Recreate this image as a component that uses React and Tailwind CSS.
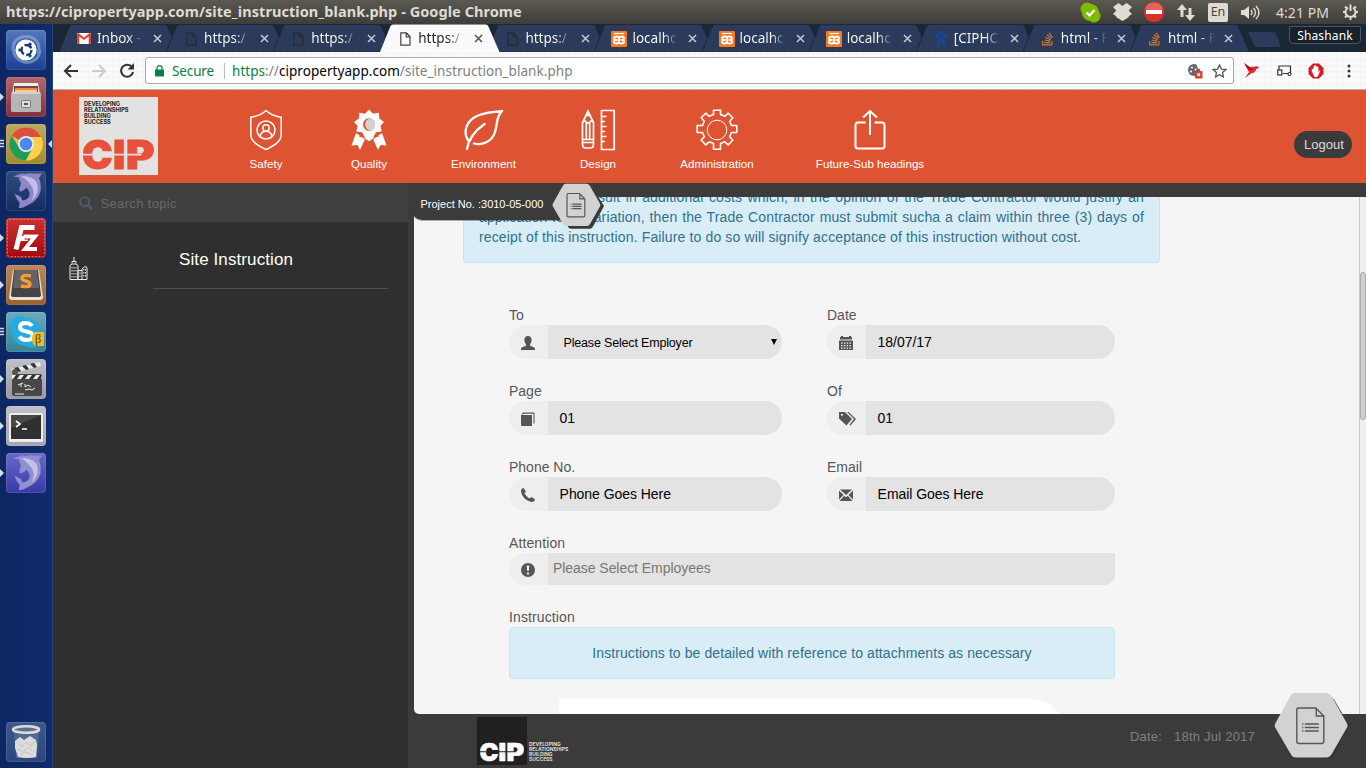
import React from "react";
import { SiStackoverflow } from "react-icons/si";

function Page({ dark }) {
  return (
    <svg width="11" height="14" viewBox="0 0 11 14" fill="none" stroke={dark ? "#444" : "#282b30"} strokeWidth="1.2">
      <path d="M.8 .8h5.6l3.600 3.700v8.700H.8zM6.200 1v3.800H10" />
    </svg>
  );
}
function Gmail() {
  return (
    <svg width="14" height="11" viewBox="0 0 14 11">
      <rect width="14" height="11" rx="1" fill="#f5f5f5" />
      <path d="M0 1v10h2.300V3.400L7 7l4.700-3.600V11H14V1L12.600 0 7 4.500 1.400 0z" fill="#dc4437" />
    </svg>
  );
}
function Xampp() {
  return (
    <span className="flex h-[16px] w-[16px] shrink-0 items-center justify-center rounded-[1px] bg-[#f47920]">
      <svg width="14" height="14" viewBox="0 0 14 14" fill="none" stroke="#fff" strokeWidth="1.800">
        <path d="M2 1.500h10" strokeWidth="1.200" />
        <path d="M7 5.500Q6.500 4.500 4.500 4.500 2 4.500 2 6.300 2 8 4 8 2 8 2 9.700 2 11.500 4.500 11.500 7 11.500 7 9V6.500Q7.500 4.500 9.500 4.500q2.500 0 2.500 1.800Q12 8 9.500 8q2.500 0 2.500 1.700 0 1.800-2.500 1.800T7 10M4 8h1.500M8.500 8H10" />
      </svg>
    </span>
  );
}
function Jira() {
  return (
    <svg width="14" height="16" viewBox="0 0 14 16" fill="none" stroke="#15498c" strokeWidth="2.400">
      <circle cx="7" cy="2.600" r="1.300" fill="#15498c" />
      <path d="M1.500 3.500Q4 7.500 7 7.500t5.500-4M2 13.500Q4 15.500 4.500 12 5 9.500 7 8.500q2 1 2.500 3.500.5 3.500 2.500 1.500M4 9.500l6 0" />
    </svg>
  );
}

const TABS = [
  { icon: "gmail", label: "Inbox -" },
  { icon: "page", label: "https:/" },
  { icon: "page", label: "https:/" },
  { icon: "page", label: "https:/", active: true },
  { icon: "page", label: "https:/" },
  { icon: "xampp", label: "localhc" },
  { icon: "xampp", label: "localhc" },
  { icon: "xampp", label: "localhc" },
  { icon: "jira", label: "[CIPHC" },
  { icon: "so", label: "html - F" },
  { icon: "so", label: "html - F" },
];

function Tab({ icon, label, active }) {
  return (
    <div className={active ? "relative z-10 h-[28px] w-[107.1px] shrink-0" : "relative h-[28px] w-[107.1px] shrink-0"}>
      <svg className="absolute top-0 left-0" width="120" height="28" viewBox="0 0 120 28">
        <path d="M0 28L10.500 2Q11.200 .5 13 .5H106Q107.500 .5 108.200 2L119.500 28z" fill={active ? "#fafafa" : "#2c3b5c"} stroke={active ? "none" : "#1b2840"} />
      </svg>
      <div className="relative flex h-[29px] items-center pl-[17px]">
        <span className="flex w-[16px] shrink-0 items-center justify-center">
          {icon === "gmail" && <Gmail />}
          {icon === "page" && <Page dark={active} />}
          {icon === "xampp" && <Xampp />}
          {icon === "jira" && <Jira />}
          {icon === "so" && <SiStackoverflow className="h-[14px] w-[13px] text-[#d9772c]" />}
        </span>
        <span className={active
          ? "ml-[5px] w-[47px] overflow-hidden bg-linear-to-r from-[#222] from-65% to-transparent to-98% bg-clip-text font-['Noto_Sans',sans-serif] text-[13.5px] whitespace-nowrap text-transparent"
          : "ml-[5px] w-[47px] overflow-hidden bg-linear-to-r from-white from-65% to-transparent to-98% bg-clip-text font-['Noto_Sans',sans-serif] text-[13.5px] whitespace-nowrap text-transparent"}>{label}</span>
        <svg className="ml-[9px] shrink-0" width="9" height="9" viewBox="0 0 9 9" stroke={active ? "#555" : "#c0c5cf"} strokeWidth="1.6"><path d="M1 1l7 7M8 1L1 8" /></svg>
      </div>
    </div>
  );
}

const LAUNCH = [
  { id: "ubuntu", bg: "from-[#5478bd] to-[#183f91]" },
  { id: "files", bg: "from-[#b4656e] to-[#852e3c]", mark: "tri" },
  { id: "chrome", bg: "from-[#bda763] to-[#a48b2b]", mark: "bars" },
  { id: "dolphin", bg: "from-[#314e82] to-[#132c61]" },
  { id: "fz", bg: "from-[#cc3032] to-[#a10608]", mark: "tri" },
  { id: "sublime", bg: "from-[#be8859] to-[#9a6128]", mark: "tri" },
  { id: "skype", bg: "from-[#68abbd] to-[#338496]", mark: "bars" },
  { id: "clap", bg: "from-[#c0c0c6] to-[#98989f]", mark: "tri" },
  { id: "term", bg: "from-[#c0c0c8] to-[#a4a4af]", mark: "tri" },
  { id: "dolphin2", bg: "from-[#686ac8] to-[#3939a7]", mark: "tri" },
];

function LaunchIcon({ id }) {
  if (id === "ubuntu") return (
    <svg width="40" height="40" viewBox="0 0 40 40" fill="none" stroke="#a9bfe2" strokeOpacity=".5" strokeWidth="3">
      <path d="M7 20C6 10 15 5 24 7c7 2 11 9 8 17M34 20c0 8-8 14-16 12-7-2-11-7-10-13" />
      <circle cx="20" cy="20" r="10.500" fill="#fff" stroke="none" />
      <circle cx="20.500" cy="20" r="5" stroke="#173a78" strokeOpacity="1" strokeWidth="2.300" strokeDasharray="8 2.470" />
      <g fill="#173a78" stroke="none"><circle cx="13.800" cy="20" r="1.600" /><circle cx="24" cy="14.200" r="1.600" /><circle cx="24" cy="25.800" r="1.600" /></g>
    </svg>
  );
  if (id === "files") return (
    <svg width="40" height="40" viewBox="0 0 40 40">
      <path d="M8 6h24l2 12H6z" fill="#eee" /><path d="M8 9h24v9H8z" fill="#6c4a3c" /><path d="M9 11h22v7H9z" fill="#ed8a41" /><path d="M9 13h22v5H9z" fill="#f6ca91" />
      <rect x="5" y="15" width="30" height="20" rx="1.500" fill="#b5b5b3" /><path d="M6 16h28" stroke="#eee" /><rect x="15.500" y="23.500" width="9" height="7" rx="1" fill="#ddd" stroke="#777" /><rect x="18" y="26" width="4" height="2" fill="#555" />
    </svg>
  );
  if (id === "chrome") return (
    <svg width="40" height="40" viewBox="0 0 40 40">
      <circle cx="20" cy="20" r="16.500" fill="#e4c441" />
      <path d="M20 20L5.700 11.750A16.500 16.500 0 0 1 34.300 11.750L35 13H20z" fill="#d95040" />
      <path d="M5.700 11.750A16.500 16.500 0 0 0 20 36.500L27 24 20 27 13.500 24z" fill="#1f9c5b" />
      <path d="M20 36.500A16.500 16.500 0 0 0 35.300 13H20l6.500 11z" fill="#fccf4b" />
      <circle cx="20" cy="20" r="8" fill="#f1f1f1" /><circle cx="20" cy="20" r="6.300" fill="#4a8af0" />
    </svg>
  );
  if (id === "dolphin" || id === "dolphin2") return (
    <svg width="40" height="40" viewBox="0 0 40 40">
      <path d="M7 5.500Q10 4.500 12.500 3.500 16 2 19 3q4-1 8-.5l9 0q-2 2.500-3 4.500 2.500 6 1.500 13-1.500 7-8 11.500-4 2.500-6.500 3.500-3 2.500-7.500 2 1.500-3 1-5.500-3-3-5-8.500 4 1 6.500 3l1.500 3.500q6-1 7-5 .5-4-3-8-3 4-7 4-.500-4 1.500-8-2-3-2-6.500-3 .5-5-.5z" fill={id === "dolphin" ? "#8d86c8" : "#8f90cf"} />
      <path d="M15 5q10 0 15 5 3 6 1 12-2 5-6 8 4-7 2-12-3-7-12-13z" fill="#d8d5f3" opacity=".7" />
    </svg>
  );
  if (id === "fz") return (
    <svg width="40" height="40" viewBox="0 0 40 40" fill="none">
      <rect x="1.500" y="1.500" width="37" height="37" rx="2" stroke="#e0888a" strokeDasharray="2 1.500" strokeWidth=".8" />
      <path d="M10 31.500L15.500 9.500h13M12.500 20.500h10" stroke="#fff" strokeWidth="5" /><path d="M18.500 18.500h10L19 31h11.500" stroke="#b30d10" strokeWidth="6" /><path d="M17.500 18.500H29L19 31h12" stroke="#fff" strokeWidth="4" />
    </svg>
  );
  if (id === "sublime") return (
    <svg width="40" height="40" viewBox="0 0 40 40">
      <path d="M7 5h26l4 27q0 3-3 3H6q-3 0-3-3z" fill="#e5dfd8" /><path d="M8 5h24l3 25q0 2-2 2H7q-2 0-2-2z" fill="#444" /><path d="M9 5h22l2 18H7z" fill="#636363" />
      <path d="M25 11q-9-2-9 2.500c0 3 8 2 8 5.500q0 4-9 2" fill="none" stroke="#ff9b2e" strokeWidth="3.400" />
    </svg>
  );
  if (id === "skype") return (
    <svg width="40" height="40" viewBox="0 0 40 40">
      <circle cx="13" cy="13" r="9" fill="#27aadf" /><circle cx="26" cy="27" r="9" fill="#27aadf" /><circle cx="20" cy="20" r="14" fill="#27aadf" />
      <path d="M26 14q-2-3-6.500-3c-7 0-7 7-1 8 7 1.500 9 2.500 8 6q-1 3-6 3-5 0-7-3.500" fill="none" stroke="#fff" strokeWidth="4" />
      <path d="M29 20h9v14h-9q-3-2-3-7t3-7z" fill="#eebb2d" /><text x="29" y="31" fontFamily="Liberation Serif" fontSize="12" fill="#4b3c11">β</text>
    </svg>
  );
  if (id === "clap") return (
    <svg width="40" height="40" viewBox="0 0 40 40">
      <rect x="6" y="15" width="30" height="22" rx="2" fill="#474747" />
      <path d="M5 10L34 3l1 4L7 14z" fill="#e8e8e8" /><path d="M6 16h30v4H6z" fill="#eee" />
      <path d="M8 9l4 4 3-1-3-4zM16 7l4 4 3-1-3-4zM24 5l4 4 3-1-3-4zM10 16l-3 4h4l3-4zM18 16l-3 4h4l3-4zM26 16l-3 4h4l3-4zM34 16l-3 4h4l1-4z" fill="#333" />
      <circle cx="9" cy="13" r="3" fill="#555" /><path d="M12 26l5-2m-2 0v4m4-3v3l3-2 3 2m-6 3l4-1 3 1 3-2m-20 6h9" stroke="#eee" fill="none" />
    </svg>
  );
  return (
    <svg width="40" height="40" viewBox="0 0 40 40">
      <rect x="3" y="7" width="34" height="29" rx="1.500" fill="#ededed" /><rect x="5" y="9" width="30" height="24" fill="#303030" /><path d="M5 9h30L5 22z" fill="#484848" />
      <path d="M10 15l4 3-4 3M16 23h5" stroke="#fff" strokeWidth="1.600" fill="none" />
    </svg>
  );
}

function Launcher() {
  return (
    <aside className="flex w-[53px] shrink-0 flex-col justify-between border-r border-[#24457c] bg-linear-to-r from-[#0d2763] to-[#102b69] pt-[6px] pb-[6px]">
      <div className="flex flex-col gap-[7px]">
        {LAUNCH.map((l) => (
          <div key={l.id} className="relative flex h-[40px] pl-[6px]">
            {l.mark === "tri" && <svg className="absolute top-[16px] left-0" width="4" height="8"><path d="M0 0l4 4-4 4z" fill="#d5dae6" /></svg>}
            {l.mark === "bars" && <svg className="absolute top-[15px] left-0" width="4" height="10" stroke="#d5dae6"><path d="M0 1.500h4M0 4.500h4M0 7.500h4" strokeWidth="1.400" /></svg>}
            {l.id === "chrome" && <svg className="absolute top-[16px] right-0" width="4" height="8"><path d="M4 0L0 4l4 4z" fill="#d5dae6" /></svg>}
            <div className={"h-[40px] w-[40px] rounded-[4px] bg-linear-to-b shadow-[inset_0_0_1px_1px_rgba(255,255,255,0.12)] " + l.bg}><LaunchIcon id={l.id} /></div>
          </div>
        ))}
      </div>
      <div className="ml-[6px] h-[40px] w-[40px] rounded-[4px] bg-linear-to-b from-[#3c598e] to-[#29467e] shadow-[inset_0_0_1px_1px_rgba(255,255,255,0.12)]">
        <svg width="40" height="40" viewBox="0 0 40 40">
          <path d="M8 9l2 27h21l2-27z" fill="#5c729b" opacity=".7" />
          <path d="M9 19l5-4 4 3 6-4 6 4 1 5-1 12q-9 2-18 0L9 26z" fill="#dcdcdc" /><path d="M12 20l4 5 4-5 5 4 4-5M12 27l6 3 4-5 6 5M14 33l6-3 7 3" stroke="#bbb" fill="none" opacity=".7" />
          <ellipse cx="20" cy="7.500" rx="13" ry="3.300" fill="#5c6f92" stroke="#dddcd6" strokeWidth="2.600" />
        </svg>
      </div>
    </aside>
  );
}

function TitleBar() {
  return (
    <div className="flex h-[24px] items-center justify-between bg-linear-to-b from-[#5b5951] to-[#3e3d39] pr-[7px] pl-[6px] font-['Noto_Sans',sans-serif] text-[#dfdbd2]">
      <span className="text-[14.5px] font-bold tracking-[0.06px] whitespace-nowrap">https://cipropertyapp.com/site_instruction_blank.php - Google Chrome</span>
      <div className="flex items-center">
        <svg width="21" height="21" viewBox="0 0 21 21"><circle cx="7" cy="7" r="6.500" fill="#7fba00" /><circle cx="14" cy="14" r="6.500" fill="#7fba00" /><circle cx="10.500" cy="10.500" r="8.500" fill="#7fba00" /><path d="M6.500 10.500l3 3 5-5.500" fill="none" stroke="#fff" strokeWidth="2.200" /></svg>
        <svg className="ml-[12px]" width="19" height="18" viewBox="0 0 19 18" fill="currentColor"><path d="M5.500 0l4 3 4-3L19 4l-3.300 3.500L19 11l-3.300 2.300v1L9.500 18l-6.200-3.700v-1L0 11l3.300-3.500L0 4z" /></svg>
        <svg className="ml-[11px]" width="22" height="22" viewBox="0 0 22 22"><circle cx="11" cy="11" r="10.200" fill="#d9302c" /><path d="M2 8a9.500 9.500 0 0 1 18 0q-9 4-18 0z" fill="#ee7770" opacity=".7" /><rect x="3" y="9" width="16" height="4" fill="#fff" /></svg>
        <svg className="ml-[12px]" width="18" height="17" viewBox="0 0 18 17" fill="currentColor"><path d="M5 0L0 6h3.500v7h3V6H10zM13 17l5-6h-3.500V4h-3v7H8z" /></svg>
        <span className="ml-[13px] flex h-[19px] w-[20px] items-center justify-center rounded-[2px] bg-[#dfdbd2] text-[12.5px] text-[#45443f]">En</span>
        <svg className="ml-[12px]" width="21" height="17" viewBox="0 0 21 17" fill="none" stroke="currentColor" strokeWidth="1.400"><path d="M1 6h3l5-4v13l-5-4H1z" fill="currentColor" stroke="none" /><path d="M11 6q2 2.500 0 5M13.500 4q4 4.500 0 9M16 2q6 6.500 0 13" /></svg>
        <span className="ml-[15px] w-[54px] text-[14px] tracking-[0.05px] whitespace-nowrap">4:21 PM</span>
        <svg className="ml-[12px]" width="17" height="18" viewBox="0 0 17 18" fill="none" stroke="currentColor" strokeWidth="2"><path d="M6 4.700a5 5 0 1 0 5 0M8.500 1.500V8M1 9h3M13 9h3M3 3.500l2 2M14 3.500l-2 2M3 14.500l2-2M14 14.500l-2-2M8.500 14v3" /></svg>
      </div>
    </div>
  );
}

function Toolbar() {
  return (
    <div className="flex h-[38px] items-center border-b border-[#b4b4b4] bg-[#fafafa] bg-[repeating-linear-gradient(90deg,transparent_0_5px,rgba(0,0,0,0.018)_5px_6px),repeating-linear-gradient(0deg,transparent_0_5px,rgba(0,0,0,0.018)_5px_6px)] pl-[10px] font-['Noto_Sans',sans-serif]">
      <svg width="16" height="14" viewBox="0 0 16 14" fill="none" stroke="#333" strokeWidth="2"><path d="M15 7H2M8 1L2 7l6 6" /></svg>
      <svg className="ml-[12px]" width="16" height="14" viewBox="0 0 16 14" fill="none" stroke="#ccc" strokeWidth="2"><path d="M1 7h13M8 1l6 6-6 6" /></svg>
      <svg className="ml-[12px]" width="16" height="15" viewBox="0 0 16 15" fill="none" stroke="#333" strokeWidth="2.100"><path d="M13 4.200A6 6 0 1 0 14 9" /><path d="M15 0v6.500H8.500z" fill="#333" stroke="none" /></svg>
      <div className="ml-[10px] flex h-[27px] w-[1089px] items-center rounded-[3px] border border-[#a9a9a9] bg-white pl-[9px] text-[13.5px]">
        <svg width="9" height="12" viewBox="0 0 9 12"><rect y="4.500" width="9" height="7" rx=".7" fill="#0b8043" /><path d="M2 5V3.200a2.500 2.500 0 0 1 5 0V5" fill="none" stroke="#0b8043" strokeWidth="1.300" /></svg>
        <span className="ml-[8px] w-[43px] pt-px tracking-[-0.12px] text-[#0b8043]">Secure</span>
        <span className="ml-[9px] h-[16px] w-px bg-[#bbb]" />
        <span className="ml-[7px] pt-px tracking-[0.05px] whitespace-nowrap text-[#808080]"><span className="text-[#0b8043]">https</span>://<span className="text-black">cipropertyapp.com</span>/site_instruction_blank.php</span>
        <svg className="ml-auto" width="16" height="16" viewBox="0 0 16 16"><circle cx="7" cy="7" r="6" fill="#666" /><g fill="#fff"><circle cx="5" cy="4.500" r="1" /><circle cx="4" cy="8.500" r="1" /><circle cx="8.500" cy="6.500" r="1" /><path d="M9 0l5 5-3 1z" /></g><rect x="8" y="8" width="7.500" height="7.500" rx="1" fill="#d93b31" /><path d="M10.200 10.200l3 3m0-3l-3 3" stroke="#fff" strokeWidth="1.100" /></svg>
        <svg className="mr-[6px] ml-[9px]" width="15" height="14" viewBox="0 0 15 14" fill="none" stroke="#555" strokeWidth="1.300"><path d="M7.500 1l1.900 4.100 4.400.5-3.300 3 .9 4.400-3.900-2.200L3.600 13l.9-4.400-3.300-3 4.400-.5z" /></svg>
      </div>
      <svg className="ml-[10px]" width="16" height="15" viewBox="0 0 16 15"><path d="M0 0l6.500 4.500Q8 3 10 4L12 3l3.500 1.500L12.500 6Q11 10 7 10.500L1 15l4-6z" fill="#e02a30" /><path d="M0 0l7 5 2 2-4.500 0z" fill="#a8131c" /></svg>
      <svg className="ml-[17px]" width="15" height="12" viewBox="0 0 15 12" fill="none" stroke="#333" strokeWidth="1.200"><path d="M2 5V1h11.500v7M6 8.500h5" /><rect x=".8" y="5" width="4" height="5" fill="#fff" /><circle cx="12.500" cy="9" r="1.500" fill="#fff" /></svg>
      <svg className="ml-[16px]" width="16" height="16" viewBox="0 0 16 16"><path d="M5 .5h6L15.500 5v6L11 15.500H5L.5 11V5z" fill="#d91c24" /><path d="M3.800 8.500V6h1.500V3.500h1.200V2.300h1.400v.7h1.300v1h1.200V9l1-1.500h1L10.500 12 9 14H6.500z" fill="#fff" /></svg>
      <svg className="ml-[23px]" width="4" height="14" viewBox="0 0 4 14" fill="#333"><circle cx="2" cy="2" r="1.500" /><circle cx="2" cy="7" r="1.500" /><circle cx="2" cy="12" r="1.500" /></svg>
    </div>
  );
}

const I = "h-[44px]";
const ICONS = {
  Safety: (
    <svg className={I} width="34" viewBox="0 0 34 44" fill="none" stroke="#fff" strokeWidth="1.500"><path d="M17 2.500C13 6.500 7 8.500 1.800 9.300V27C2 34 10 38 17 41.500 24 38 32 34 32.200 27V9.300C27 8.500 21 6.500 17 2.500z" /><circle cx="17" cy="22" r="9" /><circle cx="17" cy="20" r="3.200" /><path d="M11 28.500q1-5.300 6-5.300t6 5.300" /></svg>
  ),
  Quality: (
    <svg className={I} width="36" viewBox="0 0 36 44"><path d="M5 25L.5 37.500l6-.5 2.500 5L14 31zM31 25l4.500 12.500-6-.5-2.500 5L22 31z" fill="#fff" /><path d="M18 1.500l4 4.200 5.800-.9.600 5.800L33 14l-3.500 3.800 1.200 5.700-5.700.8L22 29.500h3l-7 4-7-4h3l-3-5.200-5.700-.8 1.200-5.700L3 14l5-3.400.4-5.800 5.600.9z" fill="#fff" /><path d="M8 28l3 .7L18 34l7-5.300 3-.7" fill="none" stroke="#de5432" /><ellipse cx="18" cy="16.500" rx="6" ry="6.300" fill="#de5432" /><ellipse cx="19.200" cy="16.500" rx="5" ry="6" fill="#d2d2d2" /></svg>
  ),
  Environment: (
    <svg className={I} width="42" viewBox="0 0 42 44" fill="none" stroke="#fff" strokeWidth="2.300" strokeLinecap="round" strokeLinejoin="round"><path d="M4 41Q6 27 21.500 16M5 32C0 25 3 14 12 9 21 4 30 4.500 39 3 33 8 34.500 17 32 24 29 34 19 37.500 11 35.500" /></svg>
  ),
  Design: (
    <svg className={I} width="36" viewBox="0 0 36 44" fill="none" stroke="#fff" strokeWidth="1.700"><path d="M2.500 14.500L8 3.500l5.500 11V36q0 4-3 4h-5q-3 0-3-4zM2.500 31.500h11M2.500 34.500h11M6.300 14v17M9.700 14v17M2.500 14.500q1.800-3 3.700-.5 1.800 2 3.700 0 1.800-2.500 3.600.5" /><path d="M6.200 7.500L8 3.500l1.800 4z" fill="#fff" /><path d="M21.500 2.500h12.700v39H21.500zM21.500 8.500h5M21.500 13.500h3.500M21.500 18.500h5M21.500 23.500h3.500M21.500 28.500h5M21.500 33.500h3.500" /></svg>
  ),
  Administration: (
    <svg className={I} width="44" viewBox="0 0 44 44" fill="none" stroke="#fff" strokeWidth="1.600" strokeLinejoin="round"><path d="M18.500 2.200h7v4.300l4.300 1.800 3.400-3.100 4.600 4.600-3.100 3.400 1.800 4.300h5.300v7h-5.300l-1.800 4.300 3.100 3.500-4.600 4.600-3.400-3.100-4.300 1.800v5.700h-7v-5.700l-4.300-1.800-3.400 3.100-4.600-4.600 3.100-3.500-1.800-4.300H2.200v-7h5.300l1.800-4.300-3.100-3.400 4.600-4.600 3.400 3.100 4.300-1.800z" /><circle cx="22" cy="22" r="9.800" strokeWidth="1" /></svg>
  ),
  "Future-Sub headings": (
    <svg className={I} width="34" viewBox="0 0 34 44" fill="none" stroke="#fff" strokeWidth="2"><path d="M12.500 14.500H5q-2.500 0-2.500 2.500V38q0 2.500 2.500 2.500h24q2.500 0 2.500-2.500V17q0-2.500-2.500-2.500h-7.500M17 27V3M10 9.500L17 3l7 6.500" /></svg>
  ),
};
const NAV = [
  ["Safety", "w-[34px] ml-[91px]"],
  ["Quality", "w-[36px] ml-[68px]"],
  ["Environment", "w-[66px] ml-[63.500px]"],
  ["Design", "w-[36px] ml-[63.500px]"],
  ["Administration", "w-[75px] ml-[63.500px]"],
  ["Future-Sub headings", "w-[109px] ml-[61px]"],
];

function Tagline({ className }) {
  return <div className={className}>DEVELOPING<br />RELATIONSHIPS<br />BUILDING<br />SUCCESS</div>;
}
function CipMark({ w, h, ink, cut }) {
  return (
    <svg width={w} height={h} viewBox="0 0 72 32">
      <g fontFamily="Inter, sans-serif" fontWeight="900" fontSize="40" fill={ink} stroke={ink} strokeWidth="1">
        <text x="-1" y="30.500" textLength="31" lengthAdjust="spacingAndGlyphs">C</text>
        <text x="30.500" y="30.500" textLength="12.500" lengthAdjust="spacingAndGlyphs">I</text>
        <text x="43.500" y="30.500" textLength="29" lengthAdjust="spacingAndGlyphs">P</text>
      </g>
      <path d="M-1 15.600h10.500M31 15.600h12M44.500 15.600h15" stroke={cut} strokeWidth="1.700" />
    </svg>
  );
}

function DocHex({ small }) {
  return (
    <svg width={small ? 54 : 76} height={small ? 47 : 68} viewBox={small ? "0 0 82 71.400" : "0 0 76 68"}>
      {small
        ? <path d="M24 5h33q3 0 5 3L79 35 63 65q-2 4-5 4.500H29q-3 0-5-3z" fill="#3a3a3a" />
        : <path d="M22 4.500h33q3 0 5 3L75 33 59 64q-2 2.500-5 2.500H25z" fill="#333" />}
      <path d="M21 1h31q3.500 0 5.500 3L73 31.500q1 2 0 4L57.500 62.500q-2 3-5 3H22q-3.500 0-5-3L1.200 35.500q-1-2 0-4L16.500 4q1.500-3 4.500-3z" fill="#d2d2d2" />
      <g transform="translate(-.7 .5)" fill="none" stroke="#565656" strokeWidth={small ? 1.800 : 1.400}><path d="M25 15.500h17.500l8 8V49q0 2-2 2h-23q-2 0-2-2V17.500q0-2 1.500-2zM43 16v7.500h7.500M31.500 31.500h14M31.500 35h14M31.500 38.500h14" /><path d="M29 31.500h1M29 35h1M29 38.500h1" strokeWidth="1.800" /></g>
    </svg>
  );
}

const G = {
  user: <path d="M7 0C9.300 0 10.600 1.500 10.600 3.800 10.600 6 9.800 7.200 9 8.200v1.300c.6 1 4.600 1.500 5 3.200V14H0v-1.300c.4-1.700 4.400-2.200 5-3.200V8.200C4.200 7.200 3.400 6 3.400 3.800 3.400 1.500 4.700 0 7 0z" />,
  cal: <path d="M1 1h1V0h2v1h6V0h2v1h1v2.500H1zM0 4.500h14V14H0zM2 6.500v1.200h1.500V6.500zm2.800 0v1.200h1.500V6.500zm2.800 0v1.200h1.500V6.500zm2.800 0v1.200h1.500V6.500zM2 9v1.200h1.500V9zm2.800 0v1.200h1.500V9zm2.800 0v1.200h1.500V9zm2.800 0v1.200h1.500V9zM2 11.500v1.200h1.500v-1.200zm2.800 0v1.200h1.500v-1.200zm2.800 0v1.200h1.500v-1.200zm2.800 0v1.200h1.500v-1.200z" fillRule="evenodd" />,
  book: <><path d="M1 3h10v11H1q-1 0-1-1V2.500z" /><path d="M.5 2L2.500.5h11V11l-1 1V1.800H3L2 2.500z" /></>,
  tags: <><path d="M0 0h6l7 7-5.500 6.500L0 6.500zM2 2v1.800h1.800V2z" fillRule="evenodd" /><path d="M8 0h1.500l7.500 7-5.500 6.500-1-.8L15 7z" /></>,
  phone: <path d="M2.500 0L5 3.500 3.500 5.200C4.500 7.300 6.500 9.300 8.700 10.400L10.500 9l3.500 2.300c0 1.500-1.500 2.700-3 2.700C5.500 13.500.5 8.500 0 3 0 1.500 1 .2 2.500 0z" />,
  mail: <path d="M1 1.500h12L7 7zM0 2.500l4.500 4.500L0 11.500zM14 2.500v9L9.500 7zM5.300 7.800L7 9.300l1.700-1.500 4.800 5.200H.5z" />,
  warn: <path d="M7 0a7 7 0 1 1 0 14A7 7 0 0 1 7 0zM5.700 2.500l.5 5.500h1.600l.5-5.500zM6 9.500v2h2v-2z" fillRule="evenodd" />,
};
function Addon({ icon }) {
  return (
    <span className="flex w-[39px] shrink-0 items-center justify-center bg-[#eee] pt-[2px] pr-[1px]">
      <svg className="overflow-visible" width="14" height="14" viewBox="0 0 14 14" fill="#555">{G[icon]}</svg>
    </span>
  );
}
function Field({ label, icon, value, select }) {
  return (
    <div>
      <div className="h-[20px] leading-[20px] text-[#555]">{label}</div>
      <div className="flex h-[34px] overflow-hidden rounded-full">
        <Addon icon={icon} />
        {select ? (
          <div className="flex grow items-center justify-between bg-[#e3e3e3] pt-[2px] pr-[5px] pl-[15.500px] text-[12.5px] tracking-[-0.17px] text-black">
            {value}
            <svg className="mb-[3px]" width="6" height="6"><path d="M0 0h6L3 6z" /></svg>
          </div>
        ) : (
          <div className="grow bg-[#e3e3e3] pl-[11.600px] leading-[34px] tracking-[-0.05px] text-black">{value}</div>
        )}
      </div>
    </div>
  );
}

export default function App() {
  return (
    <div className="flex h-[768px] w-[1366px] flex-col overflow-hidden bg-[#3b3b3b] font-['Liberation_Sans',Arial,sans-serif]">
      <TitleBar />
      <div className="flex h-[744px]">
        <Launcher />
        <div className="flex w-[1313px] flex-col">
          <div className="relative flex h-[28px] bg-[#1a2735] pl-[6px]">
            {TABS.map((t, i) => <Tab key={i} {...t} />)}
            <svg className="mt-[8px] ml-[10px]" width="34" height="16" viewBox="0 0 34 16"><path d="M1 0h25q2 0 3 2l5 13H10q-2 0-3-2z" fill="#2c3b5c" /></svg>
            <span className="absolute top-[2px] right-[5px] flex h-[18px] w-[72px] items-center justify-center rounded-b-[4px] border border-[#4b5560] bg-[#18202a] pt-px font-['Noto_Sans',sans-serif] text-[12px] tracking-[0.15px] text-white">Shashank</span>
          </div>
          <Toolbar />
          <header className="flex h-[93px] items-start bg-[#de5432] pl-[26px]">
            <div className="mt-[7px] h-[78px] w-[79px] bg-[#e2e2e0]">
              <Tagline className="h-[42px] pt-[4px] pl-[5px] font-['Inter',sans-serif] text-[5.600px] leading-[6px] font-bold whitespace-nowrap text-[#222]" />
              <div className="pl-[4px]"><CipMark w={71} h={32} ink="#e8503a" cut="#e2e2e0" /></div>
            </div>
            {NAV.map(([name, cls]) => (
              <div key={name} className={"flex shrink-0 flex-col items-center pt-[18px] " + cls}>
                {ICONS[name]}
                <span className="mt-[4px] text-[11.6px] leading-[16px] whitespace-nowrap text-white">{name}</span>
              </div>
            ))}
            <button className="mt-[41px] mr-[14px] ml-auto flex h-[27px] w-[58px] items-center justify-center rounded-full bg-[#3b3b3b] pl-[2px] text-[13px] text-[#ddd]">Logout</button>
          </header>
          <div className="flex h-[585px]">
            <nav className="w-[355px] shrink-0 bg-[#2f2f2f]">
              <div className="flex h-[39px] items-center bg-[#404040] pl-[26px]">
                <svg width="14" height="14" viewBox="0 0 14 14" fill="none" stroke="#4d5a68" strokeWidth="2"><circle cx="5.700" cy="5.700" r="4.500" /><path d="M9 9l4 4" strokeWidth="2.600" /></svg>
                <span className="pt-[2px] pl-[7.500px] text-[13px] tracking-[0.35px] text-[#6a6a6a]">Search topic</span>
              </div>
              <div className="flex">
                <svg className="mt-[35px] ml-[16px]" width="19" height="24" viewBox="0 0 19 24" fill="none" stroke="#eee"><path d="M1 22.500V8.500L3 7h4l2 1.500v14zM3 6.500V4.500h4v2M5 0v4M9 13.500h4M13 22.500V12l3-2.500 2 1v12zM9 22.500h4M9 13.500v9" /><path d="M3 10v11M5 10v11M7 10v11M11 15.500v6M14.800 12v9M16.500 12v9" strokeDasharray="1.500 1.500" /></svg>
                <div className="ml-[65px] h-[67px] w-[235px] border-b border-[#505050] pt-[27px] pl-[26px] text-[17px] leading-[22px] tracking-[0.1px] whitespace-nowrap text-white">Site Instruction</div>
              </div>
            </nav>
            <main className="relative flex w-[958px] flex-col pl-[6px]">
              <div className="h-[14px]" />
              <div className="relative flex h-[517px] overflow-hidden rounded-bl-[5px] bg-[#f5f5f5] text-[14px]">
                <div className="w-[944px] pl-[49px]">
                  <div className="-mt-[10px] w-[697px] rounded-b-[4px] border-x border-b border-[#bce8f1] bg-[#d9edf7] px-[15px] pb-[15px] leading-[20px] tracking-[0.137px] whitespace-nowrap text-[#31708f]">
                    <p className="[text-align-last:justify]">instructions can result in additional costs which, in the opinion of the Trade Contractor would justify an</p>
                    <p className="[text-align-last:justify]">application for a variation, then the Trade Contractor must submit sucha a claim within three (3) days of</p>
                    <p>receipt of this instruction. Failure to do so will signify acceptance of this instruction without cost.</p>
                  </div>
                  <div className="mt-[42px] ml-[46px] w-[606px]">
                    <div className="grid grid-cols-[273px_288px] gap-x-[45px] gap-y-[22px]">
                      <Field label="To" icon="user" value="Please Select Employer" select />
                      <Field label="Date" icon="cal" value="18/07/17" />
                      <Field label="Page" icon="book" value="01" />
                      <Field label="Of" icon="tags" value="01" />
                      <Field label="Phone No." icon="phone" value="Phone Goes Here" />
                      <Field label="Email" icon="mail" value="Email Goes Here" />
                    </div>
                    <div className="mt-[22px] h-[20px] leading-[20px] tracking-[0.1px] text-[#555]">Attention</div>
                    <div className="flex h-[32px] overflow-hidden rounded-l-[16px] rounded-br-[10px]">
                      <Addon icon="warn" />
                      <div className="grow bg-[#e3e3e1] pl-[5px] leading-[30px] tracking-[-0.05px] text-[#777]">Please Select Employees</div>
                    </div>
                    <div className="mt-[22px] h-[20px] leading-[20px] tracking-[0.12px] text-[#555]">Instruction</div>
                    <div className="flex h-[52px] items-center justify-center rounded-[4px] border border-[#bce8f1] bg-[#d9edf7] tracking-[0.085px] text-[#31708f]">Instructions to be detailed with reference to attachments as necessary</div>
                    <div className="mt-[20px] ml-[50px] h-[60px] w-[506px] rounded-tr-[34px] bg-white" />
                  </div>
                </div>
                <div className="ml-auto w-[7px] border-l border-[#c9c9c9] bg-[#f0f0f0] pt-[75px]">
                  <div className="h-[148px] rounded-[4px] border border-[#aaa] bg-[#cfcfcf]" />
                </div>
              </div>
              <footer className="flex h-[54px] items-start pl-[63px]">
                <div className="mt-[3px] flex h-[48px] w-[50px] items-end bg-[#211f20] pb-[3px] pl-[3px]"><CipMark w={44} h={20} ink="#fff" cut="#211f20" /></div>
                <Tagline className="mt-[28px] ml-[2px] font-['Inter',sans-serif] text-[5px] leading-[5px] font-bold tracking-[-0.05px] whitespace-nowrap text-[#ddd]" />
                <div className="mt-[15px] mr-[111px] ml-auto flex gap-[12px] text-[13px] leading-[16px] tracking-[0.22px] whitespace-nowrap text-[#808080]"><span>Date:</span><span>18th Jul 2017</span></div>
              </footer>
              <div className="absolute top-0 left-[4px] flex h-[37px] w-[160px] items-center rounded-bl-[10px] bg-[#3b3b3b] pt-[5px] pl-[8.500px] text-[11px] whitespace-nowrap text-white shadow-[0_1px_0_rgba(0,0,0,0.3)]">Project No. :3010-05-000</div>
              <div className="absolute top-0 left-[144px] h-[46px] overflow-hidden"><DocHex small /></div>
              <div className="absolute top-[509px] left-[866px]"><DocHex /></div>
            </main>
          </div>
        </div>
      </div>
    </div>
  );
}
